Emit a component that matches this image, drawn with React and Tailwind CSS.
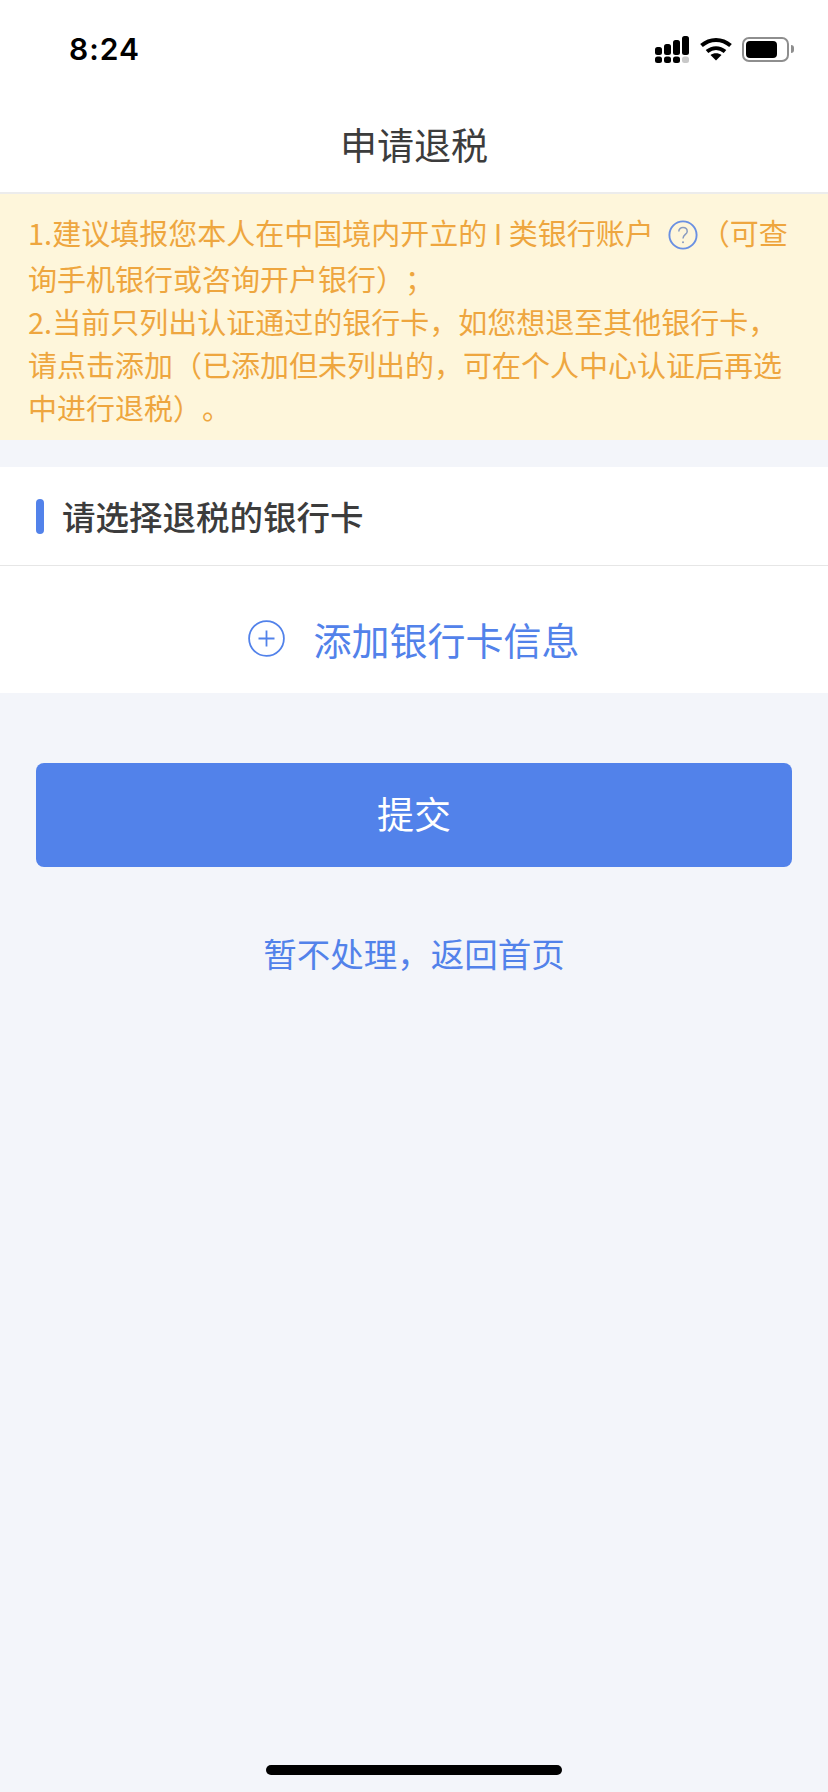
const BLUE = "#5282ea";

const Signal = () => (
  <svg width="34" height="27" viewBox="0 0 34 27" fill="#000">
    <rect x="0" y="11" width="7" height="8" rx="2.5" />
    <rect x="9" y="8" width="7" height="11" rx="2.5" />
    <rect x="18" y="4" width="7" height="15" rx="2.5" />
    <rect x="27" y="0" width="7" height="19" rx="2.5" />
    <rect x="0" y="20.5" width="7" height="6.5" rx="2.5" />
    <rect x="9" y="20.5" width="7" height="6.5" rx="2.5" />
    <rect x="18" y="20.5" width="7" height="6.5" rx="2.5" />
    <rect x="27" y="20.5" width="7" height="6.5" rx="2.5" fill="#c8c8c8" />
  </svg>
);

const Wifi = () => (
  <svg width="32" height="24" viewBox="0 0 32 24" fill="none" stroke="#000" strokeWidth="4">
    <path d="M1.5 8.5C10 1 22 1 30.5 8.5" />
    <path d="M7 14.5C12.5 10 19.5 10 25 14.5" />
    <path d="M10.5 18L16 23.5L21.5 18C18.5 15.5 13.5 15.5 10.5 18Z" fill="#000" stroke="none" />
  </svg>
);

const Battery = () => (
  <div className="flex items-center">
    <div className="w-[47px] h-[25px] rounded-[7px] border-2 border-[#8e8e8e] p-[2px] pr-[10px]">
      <div className="w-full h-full rounded-[4px] bg-black" />
    </div>
    <div className="ml-[2px] w-[3px] h-[8px] rounded-r-full bg-[#8e8e8e]" />
  </div>
);

const Question = () => (
  <svg className="inline-block align-[-12px] mb-[7px] ml-[14px] mr-[3px]" width="30" height="30" viewBox="0 0 30 30" fill="none">
    <circle cx="15" cy="15" r="13.6" stroke="#6a90e2" strokeWidth="1.9" />
    <path d="M10.8 11.5C10.8 9 12.6 7.6 15 7.6C17.5 7.6 19.2 9.2 19.2 11.4C19.2 14.4 15 14.6 15 18.6" stroke="#8a9cc0" strokeWidth="1.5" />
    <circle cx="15" cy="22.2" r="1" fill="#8a9cc0" />
  </svg>
);

const Plus = () => (
  <svg width="37" height="37" viewBox="0 0 37 37" fill="none" stroke={BLUE} strokeWidth="1.8">
    <circle cx="18.5" cy="18.5" r="17.4" />
    <path d="M18.5 10.5V26.5M10.5 18.5H26.5" />
  </svg>
);

export default function App() {
  return (
    <div className="flex flex-col min-h-[1792px] bg-[#f3f5fa] font-['Noto_Sans_CJK_SC','Noto_Sans',sans-serif] [text-spacing-trim:space-all]">
      <div className="bg-white">
        <div className="flex items-center justify-between h-[98px] pl-[69px] pr-[34px]">
          <span className="font-['Inter'] font-semibold text-[30px] text-black tracking-[1px]">8:24</span>
          <div className="flex items-center">
            <Signal />
            <div className="ml-[11px] mr-[10px]">
              <Wifi />
            </div>
            <Battery />
          </div>
        </div>
        <div className="flex items-center justify-center h-[96px] text-[37px] text-[#3c3c3c] border-b-2 border-[#ececec]">
          申请退税
        </div>
      </div>

      <div className="bg-[#fef6db] px-[28px] pt-[17px] h-[246px] text-[29px] leading-[43px] text-[#eea63f]">
        <div>
          1.建议填报您本人在中国境内开立的 I 类银行账户
          <Question />
          （可查询手机银行或咨询开户银行）；
        </div>
        <div>2.当前只列出认证通过的银行卡，如您想退至其他银行卡，请点击添加（已添加但未列出的，可在个人中心认证后再选中进行退税）。</div>
      </div>

      <div className="mt-[27px] bg-white">
        <div className="flex items-center gap-[18px] h-[99px] pl-[36px] border-b border-[#e6e6e6]">
          <div className="w-[8px] h-[35px] rounded-full bg-[#5282ea]" />
          <span className="text-[33.5px] font-medium text-[#3c3c3c]">请选择退税的银行卡</span>
        </div>
        <div className="flex items-center justify-center gap-[28px] h-[127px] pt-[17px] text-[38px] text-[#5282ea]">
          <Plus />
          <span>添加银行卡信息</span>
        </div>
      </div>

      <button className="mt-[70px] mx-[36px] h-[104px] rounded-[8px] bg-[#5282ea] text-white text-[37px] pb-[2px]">
        提交
      </button>

      <div className="mt-[61px] text-center text-[33.5px] text-[#5282ea]">暂不处理，返回首页</div>

      <div className="mt-auto mb-[17px] mx-auto w-[296px] h-[10px] rounded-full bg-black" />
    </div>
  );
}
